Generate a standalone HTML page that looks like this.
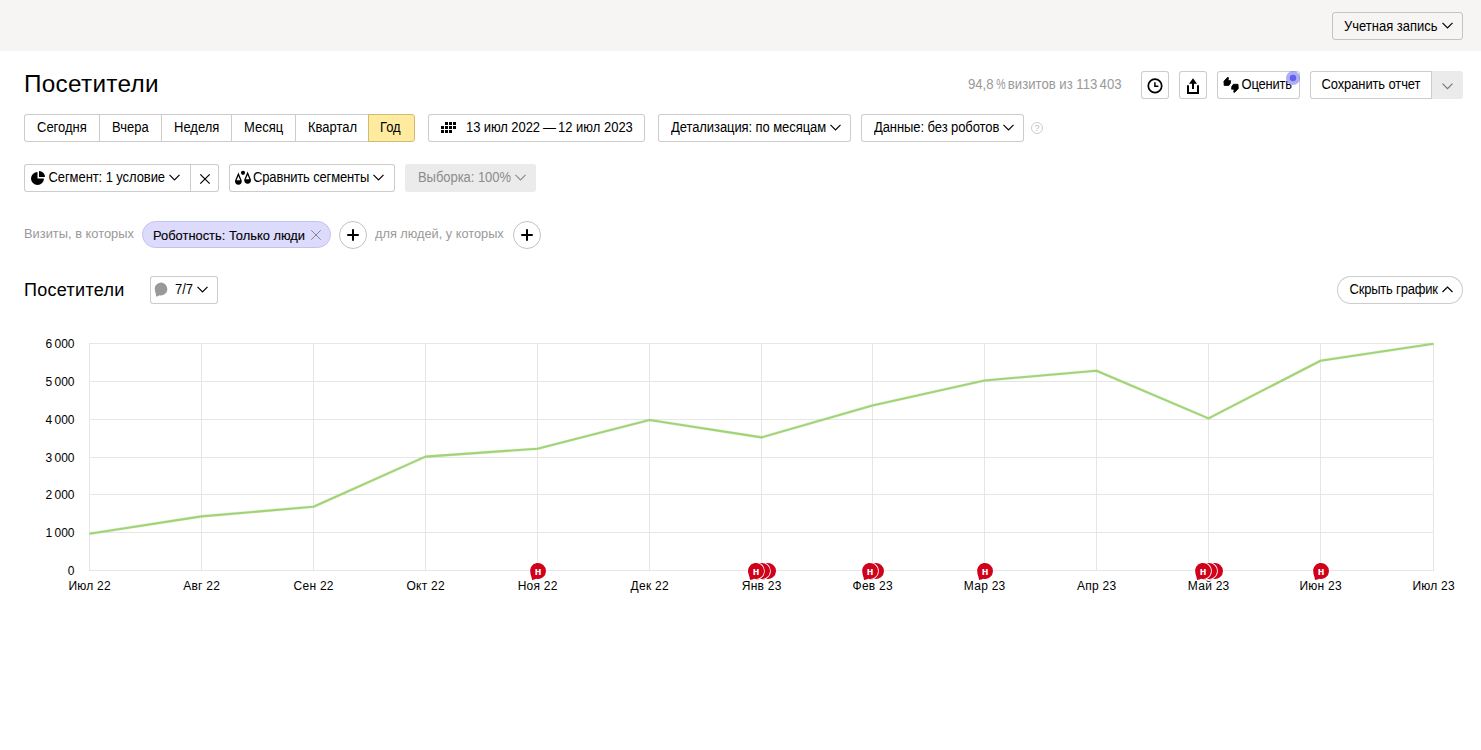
<!DOCTYPE html>
<html lang="ru">
<head>
<meta charset="utf-8">
<title>Посетители</title>
<style>
*{box-sizing:border-box;margin:0;padding:0}
html,body{width:1481px;height:750px;overflow:hidden;background:#fff}
body{font-family:"Liberation Sans",sans-serif;font-size:13px;color:#000;position:relative}
.topbar{position:absolute;left:0;top:0;width:1481px;height:51px;background:#f6f5f3}
.btn{position:absolute;height:28px;line-height:26px;border:1px solid rgba(0,0,0,.2);border-radius:3px;background:#fff;font-size:13px;white-space:nowrap;padding:0 12px;color:#000}
.arr{display:inline-block;width:11px;height:7px;margin-left:4px;vertical-align:middle;position:relative;top:-1px}
.t{display:inline-block;transform:scaleY(1.08);transform-origin:0 17.5px}
.abs{position:absolute;white-space:nowrap}
.grey{color:#999}
#acct .arr{top:-2px}
.sx,.grey{transform-origin:0 50%}
.ts{display:inline-block;width:2.5px}
.ico{position:absolute;left:0;top:0;overflow:visible}
</style>
</head>
<body>
<div class="topbar"></div>
<div class="btn" style="left:1332px;top:12px;width:131px;background:transparent;padding-left:11px;line-height:28px" id="acct"><span class="t">Учетная запись</span><svg class="arr" viewBox="0 0 11 7"><path d="M0.5 0.8 L5.5 5.8 L10.5 0.8" fill="none" stroke="#000" stroke-width="1.2"/></svg></div>

<div class="abs" id="title" style="left:24px;top:66px;font-size:24.3px;line-height:36px;letter-spacing:.3px">Посетители</div>
<div class="abs grey sx" id="visits" style="left:968px;top:75px;font-size:14px;line-height:18px;transform:scaleX(.938)">94,8<i class="ts"></i><span style="display:inline-block;transform:scaleX(.8);transform-origin:0 50%;margin-right:-3.6px">%</span> визитов из 113<i class="ts"></i>403</div>

<div class="btn" style="left:1141px;top:71px;width:28px;padding:0"></div>
<div class="btn" style="left:1179px;top:71px;width:28px;padding:0"></div>
<div class="btn" style="left:1217px;top:71px;width:83px;padding:0 0 0 23.5px;letter-spacing:-.2px"><span class="t">Оценить</span></div>
<div class="btn" style="left:1310px;top:71px;width:122px;border-radius:3px 0 0 3px;padding-left:10.5px;letter-spacing:-.12px"><span class="t">Сохранить отчет</span></div>
<div class="abs" style="left:1432px;top:71px;width:31px;height:28px;background:#ebebeb;border-radius:0 3px 3px 0"></div>
<svg class="ico" width="1481" height="110" viewBox="0 0 1481 110">
 <circle cx="1155" cy="85.9" r="6.7" fill="none" stroke="#000" stroke-width="1.7"/>
 <path d="M1154.9 82.2V86.2H1158.4" fill="none" stroke="#000" stroke-width="1.5"/>
 <path d="M1188 85.2V93H1198V85.2" fill="none" stroke="#000" stroke-width="2"/>
 <path d="M1193 78.2L1197 83.8H1194V89H1192V83.8H1189Z" fill="#000"/>
 <path d="M1442.5 83.7L1447.5 88.7L1452.5 83.7" fill="none" stroke="#777" stroke-width="1.2"/>
 <circle cx="1293" cy="78" r="7" fill="#6b6bf0" fill-opacity=".55"/>
 <circle cx="1293" cy="78" r="3.2" fill="#6060ee"/>
 <g id="thumbs" fill="#000" stroke="#000" stroke-width=".8" stroke-linejoin="round">
  <path id="tu" d="M1223.9 81.2 L1227.4 77.5 L1228.5 77.6 L1228 80.6 L1230.6 80.6 L1230.4 83.4 L1228.8 85.5 L1224.2 85.5 Z"/>
  <path d="M1223.9 81.2 L1227.4 77.5 L1228.5 77.6 L1228 80.6 L1230.6 80.6 L1230.4 83.4 L1228.8 85.5 L1224.2 85.5 Z" transform="rotate(180 1231.1 84.9)"/>
 </g>
</svg>

<div class="btn" style="left:24px;top:114px;width:76px;border-radius:3px 0 0 3px"><span class="t">Сегодня</span></div>
<div class="btn" style="left:99px;top:114px;width:63px;border-radius:0"><span class="t">Вчера</span></div>
<div class="btn" style="left:161px;top:114px;width:71px;border-radius:0"><span class="t">Неделя</span></div>
<div class="btn" style="left:231px;top:114px;width:65px;border-radius:0"><span class="t">Месяц</span></div>
<div class="btn" style="left:295px;top:114px;width:74px;border-radius:0"><span class="t">Квартал</span></div>
<div class="btn" style="left:368px;top:114px;width:47px;border-radius:0 3px 3px 0;background:#ffeba0;border-color:#cfbc74;padding-left:11px"><span class="t">Год</span></div>

<div class="btn" style="left:428px;top:114px;width:217px;padding-left:37px"><span class="t"><span style="letter-spacing:-.09px">13 июл 2022</span><span style="margin:0 2px 0 3px">—</span>12 июл 2023</span></div>
<div class="btn" style="left:658px;top:114px;width:193px;letter-spacing:-.08px"><span class="t">Детализация: по месяцам</span><svg class="arr" viewBox="0 0 11 7"><path d="M0.5 0.8 L5.5 5.8 L10.5 0.8" fill="none" stroke="#000" stroke-width="1.2"/></svg></div>
<div class="btn" style="left:861px;top:114px;width:163px;letter-spacing:-.08px"><span class="t">Данные: без роботов</span><svg class="arr" viewBox="0 0 11 7"><path d="M0.5 0.8 L5.5 5.8 L10.5 0.8" fill="none" stroke="#000" stroke-width="1.2"/></svg></div>
<div class="abs" style="left:1031px;top:122px;width:12px;height:12px;border-radius:6px;border:1px solid #ccc;color:#bbb;font-size:9px;line-height:10px;text-align:center">?</div>
<svg class="ico" width="500" height="150" viewBox="0 0 500 150" fill="#000">
 <path d="M445 122h3v3h-3zM449 122h3v3h-3zM453 122h3v3h-3zM441 126h3v3h-3zM445 126h3v3h-3zM449 126h3v3h-3zM453 126h3v3h-3zM441 130h3v3h-3zM445 130h3v3h-3zM449 130h3v3h-3z"/>
</svg>

<div class="btn" style="left:24px;top:164px;width:167px;padding-left:23.5px;letter-spacing:-.08px;border-radius:3px 0 0 3px"><span class="t">Сегмент: 1 условие</span><svg class="arr" viewBox="0 0 11 7"><path d="M0.5 0.8 L5.5 5.8 L10.5 0.8" fill="none" stroke="#000" stroke-width="1.2"/></svg></div>
<div class="btn" style="left:190px;top:164px;width:29px;padding:0;border-radius:0 3px 3px 0"></div>
<div class="btn" style="left:229px;top:164px;width:166px;padding-left:23px;letter-spacing:-.15px"><span class="t">Сравнить сегменты</span><svg class="arr" viewBox="0 0 11 7"><path d="M0.5 0.8 L5.5 5.8 L10.5 0.8" fill="none" stroke="#000" stroke-width="1.2"/></svg></div>
<div class="btn" style="left:405px;top:164px;width:131px;background:#ebebeb;border-color:transparent;color:#8c8c8c;letter-spacing:-.05px"><span class="t">Выборка: 100%</span><svg class="arr" viewBox="0 0 11 7"><path d="M0.5 0.8 L5.5 5.8 L10.5 0.8" fill="none" stroke="#8c8c8c" stroke-width="1.2"/></svg></div>
<svg class="ico" width="500" height="200" viewBox="0 0 500 200">
 <path d="M37.5 178.5V172A6.5 6.5 0 1 0 44 178.5Z" fill="#000"/>
 <path d="M39 177V171A6 6 0 0 1 45 177Z" fill="#000"/>
 <path d="M200.3 174.3L209.7 183.7M209.7 174.3L200.3 183.7" stroke="#000" stroke-width="1.2" fill="none"/>
 <circle cx="243" cy="172.8" r="2.1" fill="#000"/>
 <path d="M238.4 172.6 L241.7 180.6 A3.4 3.4 0 1 1 235.1 180.6 Z M238.4 176 L236.6 180.2 H240.2 Z" fill="#000" fill-rule="evenodd"/>
 <path d="M247.6 171.6 L250.9 179.6 A3.4 3.4 0 1 1 244.3 179.6 Z M247.6 175 L245.8 179.2 H249.4 Z" fill="#000" fill-rule="evenodd"/>
</svg>

<div class="abs grey" id="f1" style="left:24px;top:225px;font-size:13.5px;line-height:18px;transform:scaleX(.953)">Визиты, в которых</div>
<div class="abs" id="chip" style="left:142px;top:221px;width:189px;height:27px;border-radius:14px;background:#dcdbfb;border:1px solid #c3c1f0;"><span class="abs sx" style="left:10px;top:0;font-size:13.5px;line-height:27px;-webkit-text-stroke:.12px #000;transform:scaleX(.955)">Роботность: Только люди</span></div>
<div class="abs" style="left:339px;top:221px;width:28px;height:28px;border-radius:14px;border:1px solid rgba(0,0,0,.24)"></div>
<div class="abs grey" id="f2" style="left:375px;top:225px;font-size:13.5px;line-height:18px;transform:scaleX(.945)">для людей, у которых</div>
<div class="abs" style="left:513px;top:221px;width:28px;height:28px;border-radius:14px;border:1px solid rgba(0,0,0,.24)"></div>
<svg class="ico" width="600" height="260" viewBox="0 0 600 260">
 <path d="M311.2 230.2L320.8 239.8M320.8 230.2L311.2 239.8" stroke="#85859a" stroke-width="1" fill="none"/>
 <path d="M348 235H358M353 230V240" stroke="#000" stroke-width="2" stroke-linecap="round" fill="none"/>
 <path d="M522 235H532M527 230V240" stroke="#000" stroke-width="2" stroke-linecap="round" fill="none"/>
</svg>

<div class="abs" id="h2" style="left:24px;top:276px;font-size:18px;line-height:28px;letter-spacing:.3px">Посетители</div>
<div class="btn" style="left:150px;top:276px;width:68px;padding-left:24px"><span class="t">7/7</span><svg class="arr" viewBox="0 0 11 7"><path d="M0.5 0.8 L5.5 5.8 L10.5 0.8" fill="none" stroke="#000" stroke-width="1.2"/></svg></div>
<div class="btn" style="left:1337px;top:276px;width:126px;border-radius:14px;padding-left:11.5px;letter-spacing:-.2px"><span class="t">Скрыть график</span><svg class="arr" viewBox="0 0 11 7"><path d="M0.5 6 L5.5 1 L10.5 6" fill="none" stroke="#000" stroke-width="1.2"/></svg></div>
<svg class="ico" width="300" height="310" viewBox="0 0 300 310">
 <path transform="translate(161 289) scale(.8)" d="M-7.45 2.9A8 8 0 1 1 -1.8 7.8Q-3.4 8.7 -6 9.6Q-6.2 6.5 -7.45 2.9Z" fill="#999"/>
</svg>

<svg id="chart" class="abs" style="left:0;top:320px" width="1481" height="300" viewBox="0 320 1481 300" font-family="Liberation Sans, sans-serif" font-size="12" fill="#000">
<rect x="89" y="343" width="1345" height="1" fill="#e6e6e6"/>
<rect x="89" y="381" width="1345" height="1" fill="#e6e6e6"/>
<rect x="89" y="419" width="1345" height="1" fill="#e6e6e6"/>
<rect x="89" y="457" width="1345" height="1" fill="#e6e6e6"/>
<rect x="89" y="494" width="1345" height="1" fill="#e6e6e6"/>
<rect x="89" y="532" width="1345" height="1" fill="#e6e6e6"/>
<rect x="89" y="570" width="1345" height="1" fill="#e6e6e6"/>
<rect x="89" y="343" width="1" height="228" fill="#e6e6e6"/>
<rect x="201" y="343" width="1" height="228" fill="#e6e6e6"/>
<rect x="313" y="343" width="1" height="228" fill="#e6e6e6"/>
<rect x="425" y="343" width="1" height="228" fill="#e6e6e6"/>
<rect x="537" y="343" width="1" height="228" fill="#e6e6e6"/>
<rect x="649" y="343" width="1" height="228" fill="#e6e6e6"/>
<rect x="761" y="343" width="1" height="228" fill="#e6e6e6"/>
<rect x="872" y="343" width="1" height="228" fill="#e6e6e6"/>
<rect x="984" y="343" width="1" height="228" fill="#e6e6e6"/>
<rect x="1096" y="343" width="1" height="228" fill="#e6e6e6"/>
<rect x="1208" y="343" width="1" height="228" fill="#e6e6e6"/>
<rect x="1320" y="343" width="1" height="228" fill="#e6e6e6"/>
<rect x="1433" y="343" width="1" height="228" fill="#e6e6e6"/>
<polyline points="89.5,533.7 201.5,516.4 313.5,506.7 425.5,456.6 537.5,448.7 649.5,420.0 761.5,437.4 872.5,405.4 984.5,380.5 1096.5,370.7 1208.5,418.4 1320.5,360.7 1433.5,343.8" fill="none" stroke="#97cc64" stroke-opacity=".18" stroke-width="3.2" stroke-linejoin="round"/>
<polyline points="89.5,533.7 201.5,516.4 313.5,506.7 425.5,456.6 537.5,448.7 649.5,420.0 761.5,437.4 872.5,405.4 984.5,380.5 1096.5,370.7 1208.5,418.4 1320.5,360.7 1433.5,343.8" fill="none" stroke="#a1d377" stroke-width="2.1" stroke-linejoin="round" stroke-linecap="butt"/>
<text x="74.5" y="348" text-anchor="end">6 000</text>
<text x="74.5" y="386" text-anchor="end">5 000</text>
<text x="74.5" y="424" text-anchor="end">4 000</text>
<text x="74.5" y="462" text-anchor="end">3 000</text>
<text x="74.5" y="499" text-anchor="end">2 000</text>
<text x="74.5" y="537" text-anchor="end">1 000</text>
<text x="74.5" y="575" text-anchor="end">0</text>
<text x="89.7" y="590" text-anchor="middle" letter-spacing=".25">Июл 22</text>
<text x="201.7" y="590" text-anchor="middle" letter-spacing=".25">Авг 22</text>
<text x="313.7" y="590" text-anchor="middle" letter-spacing=".25">Сен 22</text>
<text x="425.7" y="590" text-anchor="middle" letter-spacing=".25">Окт 22</text>
<text x="537.7" y="590" text-anchor="middle" letter-spacing=".25">Ноя 22</text>
<text x="649.7" y="590" text-anchor="middle" letter-spacing=".25">Дек 22</text>
<text x="761.7" y="590" text-anchor="middle" letter-spacing=".25">Янв 23</text>
<text x="872.7" y="590" text-anchor="middle" letter-spacing=".25">Фев 23</text>
<text x="984.7" y="590" text-anchor="middle" letter-spacing=".25">Мар 23</text>
<text x="1096.7" y="590" text-anchor="middle" letter-spacing=".25">Апр 23</text>
<text x="1208.7" y="590" text-anchor="middle" letter-spacing=".25">Май 23</text>
<text x="1320.7" y="590" text-anchor="middle" letter-spacing=".25">Июн 23</text>
<text x="1433.7" y="590" text-anchor="middle" letter-spacing=".25">Июл 23</text>
<path transform="translate(538.00 571.00)" d="M-7.45 2.9A8 8 0 1 1 -1.8 7.8Q-3.4 8.7 -5.9 9.1Q-6.2 6.5 -7.45 2.9Z" fill="#d0021b" stroke="#fff" stroke-width="1.6" paint-order="stroke"/>
<text x="538.0" y="575" text-anchor="middle" font-size="11" font-weight="bold" fill="#fff">н</text>
<path transform="translate(768.00 571.00)" d="M-7.45 2.9A8 8 0 1 1 -1.8 7.8Q-3.4 8.7 -5.9 9.1Q-6.2 6.5 -7.45 2.9Z" fill="#d0021b" stroke="#fff" stroke-width="1.6" paint-order="stroke"/>
<path transform="translate(762.00 571.00)" d="M-7.45 2.9A8 8 0 1 1 -1.8 7.8Q-3.4 8.7 -5.9 9.1Q-6.2 6.5 -7.45 2.9Z" fill="#d0021b" stroke="#fff" stroke-width="1.6" paint-order="stroke"/>
<path transform="translate(756.00 571.00)" d="M-7.45 2.9A8 8 0 1 1 -1.8 7.8Q-3.4 8.7 -5.9 9.1Q-6.2 6.5 -7.45 2.9Z" fill="#d0021b" stroke="#fff" stroke-width="1.6" paint-order="stroke"/>
<text x="756.0" y="575" text-anchor="middle" font-size="11" font-weight="bold" fill="#fff">н</text>
<path transform="translate(876.00 571.00)" d="M-7.45 2.9A8 8 0 1 1 -1.8 7.8Q-3.4 8.7 -5.9 9.1Q-6.2 6.5 -7.45 2.9Z" fill="#d0021b" stroke="#fff" stroke-width="1.6" paint-order="stroke"/>
<path transform="translate(870.00 571.00)" d="M-7.45 2.9A8 8 0 1 1 -1.8 7.8Q-3.4 8.7 -5.9 9.1Q-6.2 6.5 -7.45 2.9Z" fill="#d0021b" stroke="#fff" stroke-width="1.6" paint-order="stroke"/>
<text x="870.0" y="575" text-anchor="middle" font-size="11" font-weight="bold" fill="#fff">н</text>
<path transform="translate(985.00 571.00)" d="M-7.45 2.9A8 8 0 1 1 -1.8 7.8Q-3.4 8.7 -5.9 9.1Q-6.2 6.5 -7.45 2.9Z" fill="#d0021b" stroke="#fff" stroke-width="1.6" paint-order="stroke"/>
<text x="985.0" y="575" text-anchor="middle" font-size="11" font-weight="bold" fill="#fff">н</text>
<path transform="translate(1215.00 571.00)" d="M-7.45 2.9A8 8 0 1 1 -1.8 7.8Q-3.4 8.7 -5.9 9.1Q-6.2 6.5 -7.45 2.9Z" fill="#d0021b" stroke="#fff" stroke-width="1.6" paint-order="stroke"/>
<path transform="translate(1209.00 571.00)" d="M-7.45 2.9A8 8 0 1 1 -1.8 7.8Q-3.4 8.7 -5.9 9.1Q-6.2 6.5 -7.45 2.9Z" fill="#d0021b" stroke="#fff" stroke-width="1.6" paint-order="stroke"/>
<path transform="translate(1203.00 571.00)" d="M-7.45 2.9A8 8 0 1 1 -1.8 7.8Q-3.4 8.7 -5.9 9.1Q-6.2 6.5 -7.45 2.9Z" fill="#d0021b" stroke="#fff" stroke-width="1.6" paint-order="stroke"/>
<text x="1203.0" y="575" text-anchor="middle" font-size="11" font-weight="bold" fill="#fff">н</text>
<path transform="translate(1321.00 571.00)" d="M-7.45 2.9A8 8 0 1 1 -1.8 7.8Q-3.4 8.7 -5.9 9.1Q-6.2 6.5 -7.45 2.9Z" fill="#d0021b" stroke="#fff" stroke-width="1.6" paint-order="stroke"/>
<text x="1321.0" y="575" text-anchor="middle" font-size="11" font-weight="bold" fill="#fff">н</text>
</svg>
</body>
</html>
